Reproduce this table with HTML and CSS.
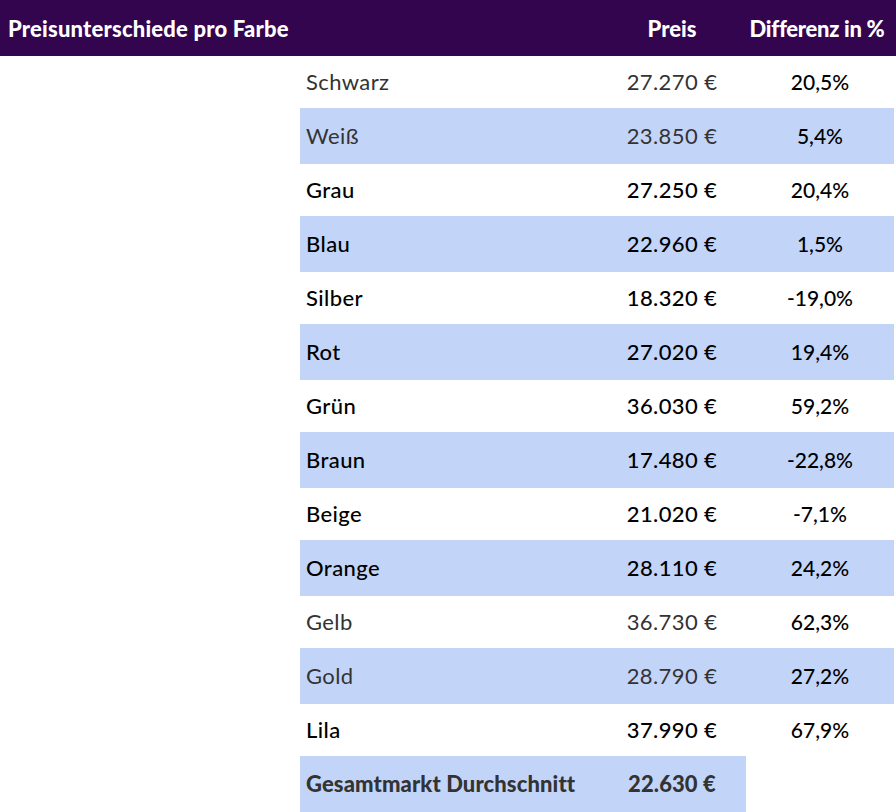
FILE: index.html
```html
<!DOCTYPE html>
<html lang="de">
<head>
<meta charset="utf-8">
<title>Preisunterschiede pro Farbe</title>
<link rel="stylesheet" href="styles.css">
</head>
<body>
<div class="header">
  <div class="h-title">Preisunterschiede pro Farbe</div>
  <div class="h-spacer"></div>
  <div class="h-col">Preis</div>
  <div class="h-col h-diff">Differenz in %</div>
</div>
<div class="table">
  <div class="row gray"><div class="c name">Schwarz</div><div class="c price">27.270 €</div><div class="c pct">20,5%</div></div>
  <div class="row alt gray"><div class="c name">Weiß</div><div class="c price">23.850 €</div><div class="c pct">5,4%</div></div>
  <div class="row"><div class="c name">Grau</div><div class="c price">27.250 €</div><div class="c pct">20,4%</div></div>
  <div class="row alt"><div class="c name">Blau</div><div class="c price">22.960 €</div><div class="c pct">1,5%</div></div>
  <div class="row"><div class="c name">Silber</div><div class="c price">18.320 €</div><div class="c pct">-19,0%</div></div>
  <div class="row alt"><div class="c name">Rot</div><div class="c price">27.020 €</div><div class="c pct">19,4%</div></div>
  <div class="row"><div class="c name">Grün</div><div class="c price">36.030 €</div><div class="c pct">59,2%</div></div>
  <div class="row alt"><div class="c name">Braun</div><div class="c price">17.480 €</div><div class="c pct">-22,8%</div></div>
  <div class="row"><div class="c name">Beige</div><div class="c price">21.020 €</div><div class="c pct">-7,1%</div></div>
  <div class="row alt"><div class="c name">Orange</div><div class="c price">28.110 €</div><div class="c pct">24,2%</div></div>
  <div class="row gray"><div class="c name">Gelb</div><div class="c price">36.730 €</div><div class="c pct">62,3%</div></div>
  <div class="row alt gray"><div class="c name">Gold</div><div class="c price">28.790 €</div><div class="c pct">27,2%</div></div>
  <div class="row"><div class="c name">Lila</div><div class="c price">37.990 €</div><div class="c pct">67,9%</div></div>
  <div class="row total"><div class="c name">Gesamtmarkt Durchschnitt</div><div class="c price">22.630 €</div><div class="c pct"></div></div>
</div>
</body>
</html>
```
FILE: styles.css
```css
* { box-sizing: border-box; }
html, body { margin: 0; padding: 0; background: #fff; }
body {
  font-family: "Lato", "Liberation Sans", sans-serif;
  color: #000;
  width: 896px;
}
.header {
  display: grid;
  grid-template-columns: 300px 298px 148px 150px;
  height: 56px;
  background: #32054e;
  color: #fff;
  font-weight: 900;
  font-size: 22px;
  align-items: center;
}
.h-title { padding-left: 8px; white-space: nowrap; letter-spacing: 0.2px; }
.h-col { text-align: center; }
.h-diff { padding-right: 8px; letter-spacing: -0.3px; }
.table {
  margin-left: 300px;
  width: 594px;
  display: flex;
  flex-direction: column;
}
.row {
  display: grid;
  grid-template-columns: 298px 148px 148px;
  height: 52px;
  font-size: 22px;
  letter-spacing: 0.4px;
  font-weight: 500;
  color: #000;
}
.row.alt { height: 56px; }
.row.alt .c { background: #c2d5f9; }
.c { display: flex; align-items: center; padding-bottom: 2px; }
.name { padding-left: 6px; }
.price { justify-content: center; }
.pct { justify-content: center; color: #000; font-size: 21px; letter-spacing: 0; }
.row.gray .name, .row.gray .price { color: #333; font-weight: 400; }
.row.total { height: 56px; }
.row.total .name, .row.total .price { background: #c2d5f9; color: #333; font-weight: 900; letter-spacing: 0.1px; }
```
